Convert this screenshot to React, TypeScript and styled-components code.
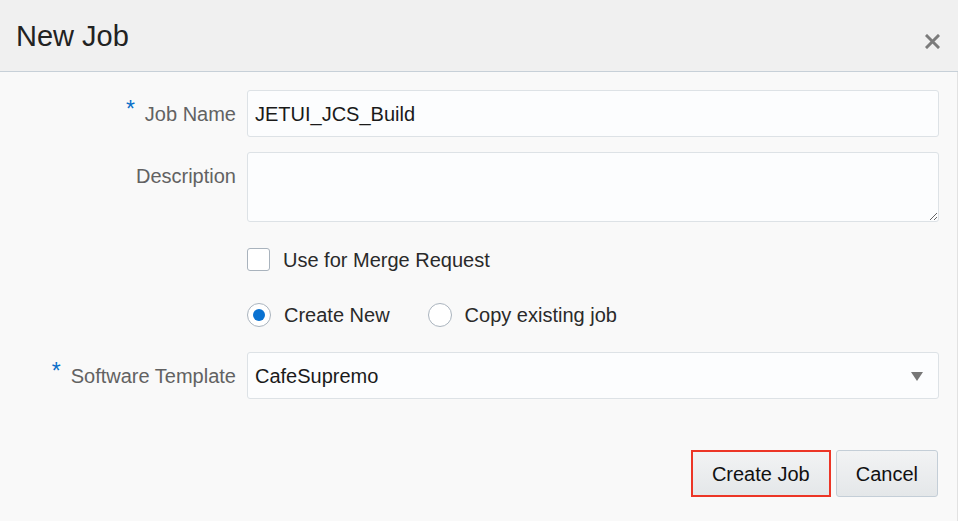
import React from "react";
import styled, { createGlobalStyle } from "styled-components";

const Global = createGlobalStyle`
  html, body { margin: 0; padding: 0; background: #f9f9f9; }
  body { font-family: "Liberation Sans", Arial, sans-serif; }
  * { box-sizing: border-box; }
`;

const Dialog = styled.div`
  width: 958px;
  height: 521px;
  display: flex;
  flex-direction: column;
  background: #f9f9f9;
  overflow: hidden;
`;

const Header = styled.div`
  height: 72px;
  flex: none;
  display: flex;
  align-items: flex-start;
  justify-content: space-between;
  background: #f0f0f0;
  border-bottom: 1px solid #c7d0d8;
  padding: 0 17px 0 16px;
`;

const Title = styled.h1`
  margin: 0;
  padding-top: 19px;
  font-size: 29px;
  font-weight: 400;
  line-height: 34px;
  color: #222;
`;

const CloseButton = styled.button`
  margin-top: 33px;
  width: 17px;
  height: 17px;
  padding: 0;
  border: none;
  background: none;
  display: flex;
  align-items: center;
  justify-content: center;
  cursor: pointer;
`;

const Body = styled.div`
  flex: 1;
  display: flex;
  flex-direction: column;
  border-right: 1px solid #e2e2e2;
`;

const Row = styled.div<{ $top: number }>`
  display: grid;
  grid-template-columns: 236px 1fr;
  column-gap: 11px;
  padding-right: 18px;
  margin-top: ${(p) => p.$top}px;
  align-items: start;
`;

const Label = styled.label`
  height: 47px;
  padding-top: 2px;
  display: flex;
  align-items: center;
  justify-content: flex-end;
  font-size: 20px;
  color: #626262;
  white-space: nowrap;
`;

const Required = styled.span`
  color: #0a6fc9;
  font-size: 23px;
  position: relative;
  top: -5px;
  margin-right: 10px;
`;

const TextInput = styled.input`
  width: 100%;
  height: 47px;
  border: 1px solid #dde2e6;
  border-radius: 3px;
  background: #fcfdfe;
  padding: 2px 8px 0 7px;
  font-family: "Liberation Sans", Arial, sans-serif;
  font-size: 20px;
  color: #1a1a1a;
  outline: none;
`;

const TextArea = styled.textarea`
  width: 100%;
  height: 70px;
  display: block;
  border: 1px solid #dde2e6;
  border-radius: 3px;
  background: #fcfdfe;
  padding: 8px 7px;
  font-family: "Liberation Sans", Arial, sans-serif;
  font-size: 20px;
  color: #1a1a1a;
  outline: none;
`;

const Options = styled.div`
  grid-column: 2;
  display: flex;
  align-items: center;
  height: 24px;
`;

const Choice = styled.label<{ $gap?: number }>`
  display: flex;
  align-items: center;
  gap: 13px;
  margin-right: ${(p) => p.$gap ?? 0}px;
  font-size: 20px;
  line-height: 24px;
  padding-top: 1px;
  color: #2a2a2a;
  white-space: nowrap;
`;

const CheckBox = styled.span`
  width: 23px;
  height: 23px;
  border: 1px solid #a9b3bd;
  border-radius: 3px;
  background: #fff;
  flex: none;
`;

const Radio = styled.span<{ $checked?: boolean }>`
  width: 24px;
  height: 24px;
  border: 1px solid #aab4be;
  border-radius: 50%;
  background: #fff;
  flex: none;
  display: flex;
  align-items: center;
  justify-content: center;
  &::after {
    content: "";
    width: 12px;
    height: 12px;
    border-radius: 50%;
    background: ${(p) => (p.$checked ? "#0a72d1" : "transparent")};
  }
`;

const Select = styled.div`
  height: 47px;
  border: 1px solid #dde2e6;
  border-radius: 3px;
  background: #fcfdfe;
  display: flex;
  align-items: center;
  justify-content: space-between;
  padding: 2px 15px 0 7px;
  font-size: 20px;
  color: #1a1a1a;
`;

const Footer = styled.div`
  display: flex;
  justify-content: flex-end;
  gap: 5px;
  margin-top: 51px;
  padding-right: 19px;
`;

const Button = styled.button<{ $highlight?: boolean }>`
  height: 47px;
  padding: 2px 19px 0;
  border: ${(p) => (p.$highlight ? "2px solid #ec3526" : "1px solid #c4ced7")};
  border-radius: ${(p) => (p.$highlight ? "0" : "3px")};
  background: linear-gradient(#f2f3f4, #e4e7e9);
  font-family: "Liberation Sans", Arial, sans-serif;
  font-size: 20px;
  color: #111;
  cursor: pointer;
`;

export default function App() {
  return (
    <>
      <Global />
      <Dialog>
        <Header>
          <Title>New Job</Title>
          <CloseButton aria-label="Close">
            <svg width="15" height="15" viewBox="0 0 15 15">
              <path d="M2 2 L13 13 M13 2 L2 13" stroke="#7b7b7b" strokeWidth="3" strokeLinecap="square" />
            </svg>
          </CloseButton>
        </Header>
        <Body>
          <Row $top={18}>
            <Label>
              <Required>*</Required>Job Name
            </Label>
            <TextInput defaultValue="JETUI_JCS_Build" />
          </Row>
          <Row $top={15}>
            <Label>Description</Label>
            <TextArea />
          </Row>
          <Row $top={25}>
            <Options>
              <Choice>
                <CheckBox />
                Use for Merge Request
              </Choice>
            </Options>
          </Row>
          <Row $top={31}>
            <Options>
              <Choice $gap={38}>
                <Radio $checked />
                Create New
              </Choice>
              <Choice>
                <Radio />
                Copy existing job
              </Choice>
            </Options>
          </Row>
          <Row $top={26}>
            <Label>
              <Required>*</Required>Software Template
            </Label>
            <Select>
              <span>CafeSupremo</span>
              <svg width="12" height="9" viewBox="0 0 12 9">
                <path d="M0 0 H12 L6 9 Z" fill="#777" />
              </svg>
            </Select>
          </Row>
          <Footer>
            <Button $highlight>Create Job</Button>
            <Button>Cancel</Button>
          </Footer>
        </Body>
      </Dialog>
    </>
  );
}
